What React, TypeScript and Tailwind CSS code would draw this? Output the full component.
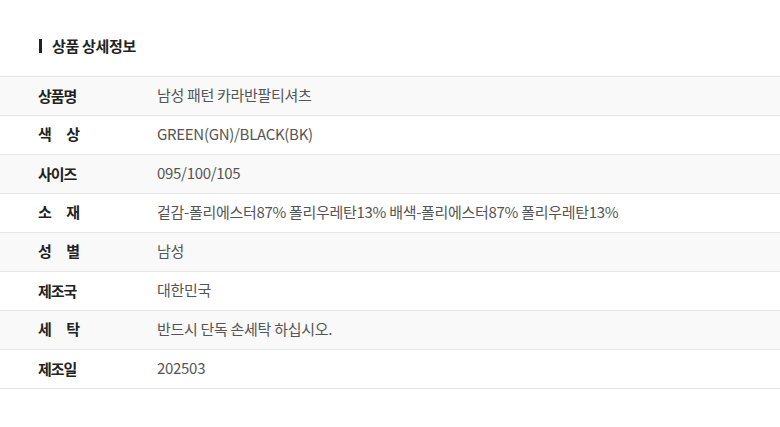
import React from "react";

const rows: { label: string; spaced?: boolean; value: string }[] = [
  { label: "상품명", value: "남성 패턴 카라반팔티셔츠" },
  { label: "색상", spaced: true, value: "GREEN(GN)/BLACK(BK)" },
  { label: "사이즈", value: "095/100/105" },
  { label: "소재", spaced: true, value: "겉감-폴리에스터87% 폴리우레탄13% 배색-폴리에스터87% 폴리우레탄13%" },
  { label: "성별", spaced: true, value: "남성" },
  { label: "제조국", value: "대한민국" },
  { label: "세탁", spaced: true, value: "반드시 단독 손세탁 하십시오." },
  { label: "제조일", value: "202503" },
];

export default function App() {
  return (
    <div
      className="w-[780px] h-[427px] bg-white overflow-hidden"
      style={{ fontFamily: '"Noto Sans CJK KR", "Noto Sans", sans-serif' }}
    >
      <div className="h-[76px] flex items-center pl-[39px] pt-[16px]">
        <span className="w-[3px] h-[14px] bg-[#222] mr-[10px]" />
        <span className="text-[15px] font-bold text-[#222] tracking-[-0.3px]">상품 상세정보</span>
      </div>
      <div className="border-t border-[#e6e6e6]">
        {rows.map((r, i) => (
          <div
            key={i}
            className={`h-[39px] flex items-center pb-[2px] border-b border-[#e6e6e6] ${
              i % 2 === 0 ? "bg-[#f9f9f9]" : "bg-white"
            }`}
          >
            <div className="w-[157px] pl-[38px] shrink-0">
              {r.spaced ? (
                <span className="w-[42px] flex justify-between text-[15px] font-bold text-[#222]">
                  {r.label.split("").map((c, j) => (
                    <span key={j}>{c}</span>
                  ))}
                </span>
              ) : (
                <span className="text-[15px] font-bold text-[#222] tracking-[-1px]">{r.label}</span>
              )}
            </div>
            <div className="text-[15px] text-[#555] tracking-[-0.3px]">{r.value}</div>
          </div>
        ))}
      </div>
    </div>
  );
}
